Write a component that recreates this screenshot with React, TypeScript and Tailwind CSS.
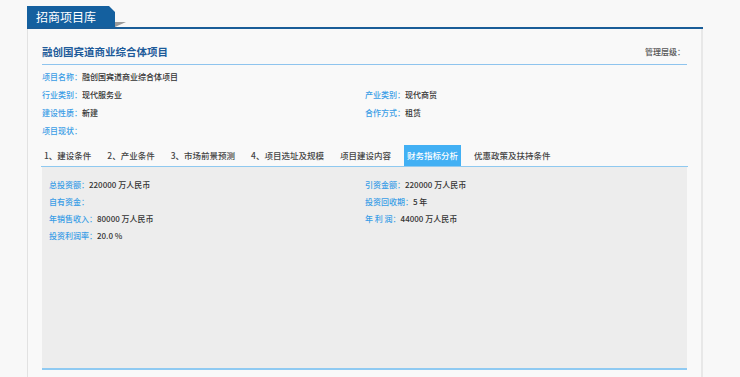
import React from "react";

const font = { fontFamily: '"Noto Sans CJK SC", "Noto Sans", sans-serif' };

const Field = ({ label, value }: { label: string; value?: string }) => (
  <div className="flex items-center h-[18px] text-[8px] font-medium whitespace-nowrap">
    <span className="text-[#3a9de6]">{label}：</span>
    <span className="text-[#333]">{value}</span>
  </div>
);

const Stat = ({ label, value }: { label: string; value?: string }) => (
  <div className="flex items-center h-[17px] text-[8px] font-medium whitespace-nowrap">
    <span className="text-[#3a9de6]">{label}：</span>
    <span className="text-[#333]">{value}</span>
  </div>
);

const tabs = [
  "1、建设条件",
  "2、产业条件",
  "3、市场前景预测",
  "4、项目选址及规模",
  "项目建设内容",
  "财务指标分析",
  "优惠政策及扶持条件",
];

export default function App() {
  return (
    <div className="w-[740px] h-[377px] overflow-hidden bg-[#f8f8f8] pl-[27px]" style={font}>
      <div className="w-[676px]">
        {/* header tab */}
        <div className="relative h-[27px] pt-[6px]">
          <div className="h-[21px] w-[88px] bg-[#14609f] pl-[9px] flex items-center text-white text-[12px] leading-none [clip-path:polygon(0_0,82px_0,88px_6px,88px_100%,0_100%)]">
            招商项目库
          </div>
          <svg className="absolute left-[88px] top-[22px]" width="11" height="5" viewBox="0 0 11 5">
            <polygon points="0,0 11,0 0,5" fill="#9b9b9b" />
          </svg>
        </div>
        <div className="h-[2px] bg-[#1a5d98]" />

        {/* panel */}
        <div className="h-[348px] bg-[#f9f9f9] border-l border-[#e2e2e2] border-r-2 border-r-[#e8e8e8] px-[14px]">
          <div className="pt-[15px] pb-[4px] border-b border-[#8ec4ee] flex items-center justify-between h-[36px]">
            <span className="text-[10.5px] font-bold text-[#1d5b9a] leading-[16px]">融创国宾道商业综合体项目</span>
            <span className="text-[8px] font-medium text-[#555] pr-[2px]">管理层级：</span>
          </div>

          <div className="mt-[3px] grid grid-cols-[323px_1fr]">
            <Field label="项目名称" value="融创国宾道商业综合体项目" />
            <div />
            <Field label="行业类别" value="现代服务业" />
            <Field label="产业类别" value="现代商贸" />
            <Field label="建设性质" value="新建" />
            <Field label="合作方式" value="租赁" />
            <Field label="项目现状" />
            <div />
          </div>

          <div className="mt-[5px] h-[22px] flex gap-[10px] -ml-[1px] border-b border-[#8fc9f0] -mr-[1px]">
            {tabs.map((t) => (
              <div
                key={t}
                className={
                  t === "财务指标分析"
                    ? "h-[21px] px-[3px] flex items-center text-[8.5px] font-medium text-white bg-[#42b0f4] whitespace-nowrap"
                    : "h-[21px] px-[3px] flex items-center text-[8.5px] font-medium text-[#444] whitespace-nowrap"
                }
              >
                {t}
              </div>
            ))}
          </div>

          <div className="h-[203px] bg-[#ededed] border-b-2 border-[#8fcaf2] pt-[9px] pl-[7px]">
            <div className="grid grid-cols-[316px_1fr]">
              <Stat label="总投资额" value="220000 万人民币" />
              <Stat label="引资金额" value="220000 万人民币" />
              <Stat label="自有资金" />
              <Stat label="投资回收期" value="5 年" />
              <Stat label="年销售收入" value="80000 万人民币" />
              <Stat label="年 利 润" value="44000 万人民币" />
              <Stat label="投资利润率" value="20.0 %" />
              <div />
            </div>
          </div>
        </div>
      </div>
    </div>
  );
}
